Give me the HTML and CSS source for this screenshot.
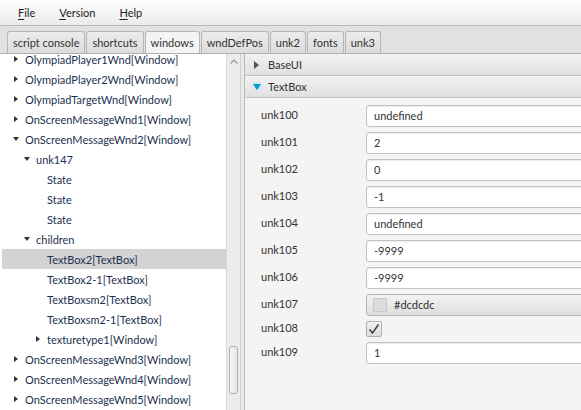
FILE: index.html
```html
<!DOCTYPE html>
<html>
<head>
<meta charset="utf-8">
<link rel="stylesheet" href="styles.css">
</head>
<body>
<div class="menubar">
  <span class="menu-item"><u>F</u>ile</span>
  <span class="menu-item"><u>V</u>ersion</span>
  <span class="menu-item"><u>H</u>elp</span>
</div>
<div class="tabbar">
  <div class="tab">script console</div>
  <div class="tab">shortcuts</div>
  <div class="tab active">windows</div>
  <div class="tab">wndDefPos</div>
  <div class="tab">unk2</div>
  <div class="tab">fonts</div>
  <div class="tab">unk3</div>
</div>
<div class="main">
  <div class="tree-pane">
    <div class="tree">
      <div class="rows">
        <div class="row l0"><span class="twisty"><i class="tri-r"></i></span>OlympiadPlayer1Wnd[Window]</div>
        <div class="row l0"><span class="twisty"><i class="tri-r"></i></span>OlympiadPlayer2Wnd[Window]</div>
        <div class="row l0"><span class="twisty"><i class="tri-r"></i></span>OlympiadTargetWnd[Window]</div>
        <div class="row l0"><span class="twisty"><i class="tri-r"></i></span>OnScreenMessageWnd1[Window]</div>
        <div class="row l0"><span class="twisty"><i class="tri-d"></i></span>OnScreenMessageWnd2[Window]</div>
        <div class="row l1"><span class="twisty"><i class="tri-d"></i></span>unk147</div>
        <div class="row l2"><span class="twisty"></span>State</div>
        <div class="row l2"><span class="twisty"></span>State</div>
        <div class="row l2"><span class="twisty"></span>State</div>
        <div class="row l1"><span class="twisty"><i class="tri-d"></i></span>children</div>
        <div class="row l2 sel"><span class="twisty"></span>TextBox2[TextBox]</div>
        <div class="row l2"><span class="twisty"></span>TextBox2-1[TextBox]</div>
        <div class="row l2"><span class="twisty"></span>TextBoxsm2[TextBox]</div>
        <div class="row l2"><span class="twisty"></span>TextBoxsm2-1[TextBox]</div>
        <div class="row l2"><span class="twisty"><i class="tri-r"></i></span>texturetype1[Window]</div>
        <div class="row l0"><span class="twisty"><i class="tri-r"></i></span>OnScreenMessageWnd3[Window]</div>
        <div class="row l0"><span class="twisty"><i class="tri-r"></i></span>OnScreenMessageWnd4[Window]</div>
        <div class="row l0"><span class="twisty"><i class="tri-r"></i></span>OnScreenMessageWnd5[Window]</div>
      </div>
    </div>
    <div class="vscroll">
      <div class="sb-up"><svg width="8" height="5" viewBox="0 0 8 5"><path d="M0.5 4.5 L4 1 L7.5 4.5" fill="none" stroke="#9a9a9a" stroke-width="1.2"/></svg></div>
      <div class="sb-track"><div class="thumb"></div></div>
      <div class="sb-down"></div>
    </div>
  </div>
  <div class="divider"></div>
  <div class="props">
    <div class="tp-header"><span class="tp-arrow"><i class="tri-r gray"></i></span>BaseUI</div>
    <div class="tp-header"><span class="tp-arrow"><i class="tri-d blue"></i></span>TextBox</div>
    <div class="tp-content">
      <div class="label">unk100</div><div class="field">undefined</div>
      <div class="label">unk101</div><div class="field">2</div>
      <div class="label">unk102</div><div class="field">0</div>
      <div class="label">unk103</div><div class="field">-1</div>
      <div class="label">unk104</div><div class="field">undefined</div>
      <div class="label">unk105</div><div class="field">-9999</div>
      <div class="label">unk106</div><div class="field">-9999</div>
      <div class="label">unk107</div><div class="color"><span class="swatch"></span>#dcdcdc</div>
      <div class="label">unk108</div><div class="check-cell"><span class="check"><svg width="14" height="14" viewBox="0 0 14 14"><path d="M2.5 7.5 L5.5 11 L11.5 2.5" fill="none" stroke="#3a3a3a" stroke-width="1.4"/></svg></span></div>
      <div class="label">unk109</div><div class="field">1</div>
    </div>
  </div>
</div>
</body>
</html>
```
FILE: styles.css
```css
html, body {
  margin: 0;
  padding: 0;
}
body {
  width: 581px;
  height: 410px;
  overflow: hidden;
  font-family: "Lato", "Open Sans", sans-serif;
  font-size: 11px;
  color: #333;
  background: #f4f4f4;
}

.menubar {
  height: 25px;
  border-bottom: 1px solid #b9b9b9;
  background: linear-gradient(#fdfdfd, #ebebeb);
  display: flex;
  align-items: center;
  padding-left: 6px;
}
.menu-item {
  padding: 0 12px;
  color: #222;
}
.menu-item u {
  text-decoration-thickness: 1px;
  text-underline-offset: 2px;
}

.tabbar {
  height: 27px;
  border-bottom: 1px solid #b0b0b0;
  background: #e1e1e1;
  display: flex;
  align-items: flex-end;
  padding-left: 7px;
  gap: 1px;
}
.tab {
  height: 21px;
  padding: 0 5px;
  border: 1px solid #b6b6b6;
  border-bottom: none;
  border-radius: 3px 3px 0 0;
  background: linear-gradient(#ececec, #dcdcdc);
  display: flex;
  align-items: center;
  color: #333;
}
.tab.active {
  background: #f4f4f4;
}

.main {
  display: flex;
  height: 356px;
}
.tree-pane {
  width: 240px;
  flex: none;
  display: flex;
  background: #fff;
}
.tree {
  width: 226px;
  overflow: hidden;
}
.rows {
  margin-top: -5px;
  padding-left: 2px;
}
.row {
  height: 20px;
  display: flex;
  align-items: center;
  white-space: nowrap;
  color: #1c3150;
}
.row.l0 { padding-left: 8px; }
.row.l1 { padding-left: 19px; }
.row.l2 { padding-left: 30px; }
.row.sel { background: #d3d3d3; }
.twisty {
  width: 15px;
  flex: none;
  display: flex;
  align-items: center;
  padding-left: 3px;
  box-sizing: border-box;
}
.tri-r {
  display: block;
  width: 0;
  height: 0;
  border-left: 4px solid #333;
  border-top: 3.5px solid transparent;
  border-bottom: 3.5px solid transparent;
  margin-left: 1px;
}
.tri-d {
  display: block;
  width: 0;
  height: 0;
  border-top: 4px solid #333;
  border-left: 3.5px solid transparent;
  border-right: 3.5px solid transparent;
}

.vscroll {
  width: 14px;
  flex: none;
  background: #ececec;
  border-left: 1px solid #dadada;
  box-sizing: border-box;
  display: flex;
  flex-direction: column;
}
.sb-up {
  height: 14px;
  display: flex;
  align-items: center;
  justify-content: center;
}
.sb-track {
  flex: 1;
  display: flex;
  flex-direction: column;
  justify-content: flex-end;
  align-items: center;
}
.thumb {
  width: 9px;
  height: 48px;
  box-sizing: border-box;
  border: 1px solid #b2b2b2;
  border-radius: 3px;
  background: linear-gradient(90deg, #f6f6f6, #e4e4e4);
}
.sb-down {
  height: 16px;
}

.divider {
  width: 5px;
  flex: none;
  box-sizing: border-box;
  background: #eaeaea;
  border-left: 1px solid #cfcfcf;
  border-right: 1px solid #b9b9b9;
}

.props {
  flex: 1;
  overflow: hidden;
  background: #f4f4f4;
}
.tp-header {
  height: 21px;
  border-bottom: 1px solid #c4c4c4;
  background: linear-gradient(#f2f2f2, #e0e0e0);
  display: flex;
  align-items: center;
  padding-left: 9px;
  color: #333;
}
.tp-arrow {
  width: 14px;
  flex: none;
  display: flex;
  align-items: center;
}
.tri-r.gray {
  border-left: 5px solid #555;
  border-top: 4px solid transparent;
  border-bottom: 4px solid transparent;
  margin-left: 0;
}
.tri-d.blue {
  border-top: 6px solid #0a9ad6;
  border-left: 4px solid transparent;
  border-right: 4px solid transparent;
  margin-left: -1px;
  filter: drop-shadow(0 0 1px #7fd0f5);
}

.tp-content {
  padding: 7px 0 0 16px;
  display: grid;
  grid-template-columns: 105px 420px;
  row-gap: 5px;
  align-items: center;
}
.label {
  color: #333;
  line-height: 14px;
  margin-top: -2px;
}
.field {
  height: 22px;
  box-sizing: border-box;
  border: 1px solid #c2c2c2;
  border-radius: 3px;
  background: #fff;
  padding: 0 0 2px 7px;
  display: flex;
  align-items: center;
  box-shadow: inset 0 1px 1px #ececec;
  color: #333;
}
.color {
  height: 22px;
  box-sizing: border-box;
  border: 1px solid #b4b4b4;
  border-radius: 3px;
  background: linear-gradient(#f3f3f3, #dedede);
  padding: 0 0 1px 6px;
  display: flex;
  align-items: center;
  gap: 7px;
  color: #333;
}
.swatch {
  width: 14px;
  height: 14px;
  box-sizing: border-box;
  background: #dcdcdc;
  border: 1px solid #c8c8c8;
}
.check-cell {
  height: 16px;
  display: flex;
  align-items: center;
}
.check {
  width: 16px;
  height: 16px;
  box-sizing: border-box;
  border: 1px solid #b0b0b0;
  border-radius: 2px;
  background: linear-gradient(#f2f2f2, #dcdcdc);
  display: flex;
  align-items: center;
  justify-content: center;
}
```
